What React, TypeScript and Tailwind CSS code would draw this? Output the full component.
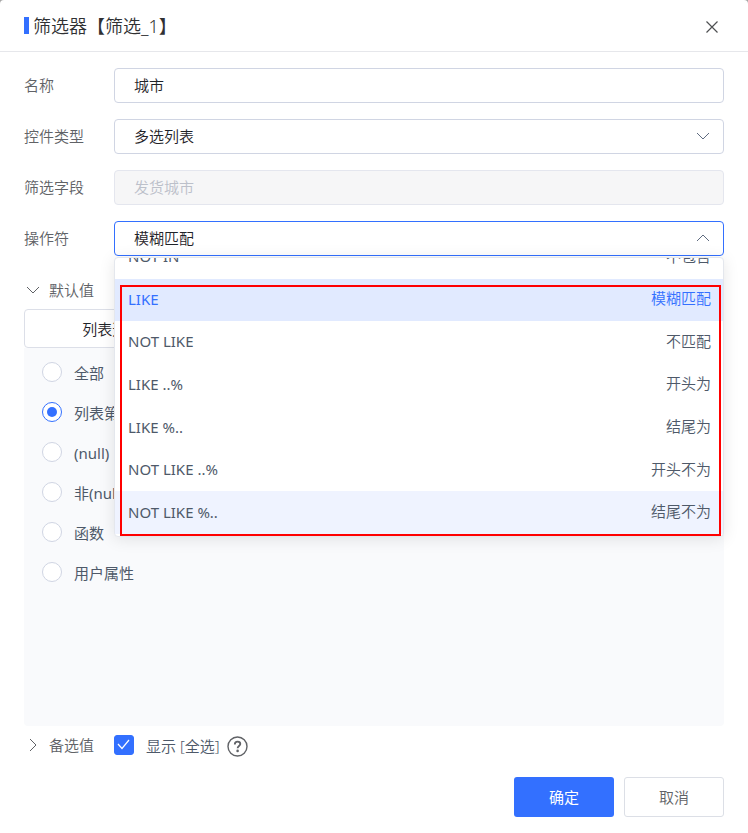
import { useState } from "react";
import type { ReactNode } from "react";

const operators = [
  { value: "NOT IN", label: "不包含" },
  { value: "LIKE", label: "模糊匹配" },
  { value: "NOT LIKE", label: "不匹配" },
  { value: "LIKE ..%", label: "开头为" },
  { value: "LIKE %..", label: "结尾为" },
  { value: "NOT LIKE ..%", label: "开头不为" },
  { value: "NOT LIKE %..", label: "结尾不为" },
];

const defaults = ["全部", "列表第一项", "(null)", "非(null)", "函数", "用户属性"];

const fieldClass =
  "w-full h-[35px] rounded border border-[#d0d5e3] bg-white pl-[19px] pr-10 pb-[2px] text-[15px] text-[#1f2329] appearance-none outline-none";

function Chevron({ className }: { className?: string }) {
  return (
    <svg className={className} width="14" height="8" viewBox="0 0 14 8" fill="none" stroke="currentColor">
      <path d="M1 1l6 6 6-6" />
    </svg>
  );
}

function Field({ id, label, children }: { id: string; label: string; children: ReactNode }) {
  return (
    <div className="flex items-center">
      <label htmlFor={id} className="w-[90px] shrink-0 pb-[2px] text-[#606266]">
        {label}
      </label>
      <div className="relative flex-1">{children}</div>
    </div>
  );
}

export default function App() {
  const [name, setName] = useState("城市");
  const [operator, setOperator] = useState("LIKE");
  const [defaultValue, setDefaultValue] = useState("列表第一项");
  const [showAll, setShowAll] = useState(true);

  return (
    <div className="min-h-screen bg-[#a5a5a5] flex flex-col text-[15px] leading-5 font-[350] font-['Noto_Sans','Noto_Sans_CJK_SC',sans-serif]">
      <div className="flex-1 flex flex-col bg-white rounded-t">
        {/* Header */}
        <header className="h-[52px] shrink-0 flex items-center justify-between px-6 border-b border-[#e6e7eb]">
          <h1 className="flex items-center gap-1 text-[18px] leading-6 font-[350] text-[#303133]">
            <span className="w-[5px] h-[17px] bg-[#3370ff]" />
            筛选器【筛选_1】
          </h1>
          <button type="button" aria-label="关闭" className="w-6 h-6 mt-[2px] flex items-center justify-center text-[#4e5052]">
            <svg width="12" height="12" viewBox="0 0 12 12" fill="none" stroke="currentColor" strokeWidth="1.2">
              <path d="M.5.5l11 11M11.5.5l-11 11" />
            </svg>
          </button>
        </header>

        <main className="flex-1 flex flex-col px-6 pt-4">
          <div className="flex flex-col gap-4">
            <Field id="name" label="名称">
              <input id="name" className={fieldClass} value={name} onChange={(e) => setName(e.target.value)} />
            </Field>
            <Field id="type" label="控件类型">
              <select id="type" className={fieldClass}>
                <option>多选列表</option>
              </select>
              <Chevron className="absolute right-[14px] top-[13px] text-[#5f6b80] pointer-events-none" />
            </Field>
            <Field id="field" label="筛选字段">
              <input
                id="field"
                disabled
                value="发货城市"
                readOnly
                className="w-full h-[35px] rounded border border-[#e4e6ee] bg-[#f6f6f7] pl-[19px] pb-[2px] text-[15px] text-[#bcc0ca]"
              />
            </Field>
            <Field id="operator" label="操作符">
              <select
                id="operator"
                value={operator}
                onChange={(e) => setOperator(e.target.value)}
                className="w-full h-[35px] rounded border border-[#3370ff] bg-white pl-[19px] pr-10 pb-[2px] text-[15px] text-[#1f2329] appearance-none outline-none"
              >
                {operators.map((o) => (
                  <option key={o.value} value={o.value}>
                    {o.label}
                  </option>
                ))}
              </select>
              <Chevron className="absolute right-[14px] top-[13px] text-[#5f6b80] rotate-180 pointer-events-none" />

              {/* Operator list, scrolled to its end */}
              <div className="absolute z-10 left-0 right-0 top-9 h-[280px] rounded border border-[#e4e7ed] bg-white shadow-[0_2px_16px_rgba(0,0,0,0.1)]">
                <div className="h-full flex flex-col justify-end overflow-hidden pb-[2px]">
                  <ul role="listbox" aria-label="操作符" className="shrink-0 h-[298px] grid grid-rows-7">
                    {operators.map((o) => (
                      <li
                        key={o.value}
                        role="option"
                        aria-selected={o.value === operator}
                        onClick={() => setOperator(o.value)}
                        className={[
                          "flex items-center justify-between px-3 cursor-pointer",
                          o.value === operator
                            ? "bg-[#e1eaff] text-[#3370ff]"
                            : "text-[#4e5969] last:bg-[#eff3ff] hover:bg-[#eff3ff]",
                        ].join(" ")}
                      >
                        <span className="pl-px pb-[2px] font-normal">{o.value}</span>
                        <span className="pb-[3px]">{o.label}</span>
                      </li>
                    ))}
                  </ul>
                </div>
                <div className="absolute left-[5px] right-[2px] top-[27px] bottom-0 border-2 border-[#ff0000] pointer-events-none" />
              </div>
            </Field>
          </div>

          {/* Default value */}
          <button type="button" className="mt-4 h-[37px] shrink-0 self-start flex items-center gap-[9px] pl-[2px] pb-[2px] text-[#606266]">
            <Chevron />
            默认值
          </button>
          <div className="h-[39px] shrink-0 flex rounded border border-[#dcdfe8]">
            <button type="button" className="w-1/4 text-[#1f2329]">
              列表选项
            </button>
          </div>
          <div className="flex-1 min-h-[260px] rounded-b bg-[#f9fafc] pt-1 pl-[18px]">
            {defaults.map((d) => (
              <label key={d} className="h-10 flex items-center gap-3 font-normal text-[#4e5969]">
                <input
                  type="radio"
                  name="default"
                  checked={defaultValue === d}
                  onChange={() => setDefaultValue(d)}
                  className="appearance-none w-5 h-5 rounded-full border border-[#d0d5e3] bg-white flex items-center justify-center checked:border-[#3370ff] checked:before:block checked:before:w-[10px] checked:before:h-[10px] checked:before:rounded-full checked:before:bg-[#3370ff]"
                />
                <span className="pt-[2px]">{d}</span>
              </label>
            ))}
          </div>

          {/* Options */}
          <div className="h-[39px] shrink-0 flex items-center">
            <button type="button" className="w-[90px] flex items-center gap-[9px] pl-[2px] pb-[2px] text-[#606266]">
              <Chevron className="-rotate-90" />
              备选值
            </button>
            <label className="flex items-center gap-3 text-[#4e5969]">
              <span className="relative w-5 h-[22px]">
                <input
                  type="checkbox"
                  checked={showAll}
                  onChange={(e) => setShowAll(e.target.checked)}
                  className="block appearance-none w-5 h-5 rounded-[3px] border border-[#d0d5e3] checked:border-[#3370ff] checked:bg-[#3370ff]"
                />
                <svg className="absolute inset-0 pointer-events-none" width="20" height="20" viewBox="0 0 20 20" fill="none" stroke="#fff" strokeWidth="1.2">
                  <path d="M4 9l4 4.500 7-8.500" />
                </svg>
              </span>
              <span>显示 [全选]</span>
            </label>
            <button type="button" aria-label="帮助" className="ml-[7px] pt-[2px] text-[#606266]">
              <svg width="21" height="21" viewBox="0 0 21 21" fill="none" stroke="currentColor">
                <circle cx="10.500" cy="10.500" r="9.500" strokeWidth="1.400" />
                <path d="M7.800 8.400c0-1.700 1.200-2.700 2.800-2.700s2.700 1 2.700 2.400c0 1.900-2.700 2-2.700 4.100" strokeWidth="1.800" />
                <circle cx="10.600" cy="14.900" r="1.300" fill="currentColor" stroke="none" />
              </svg>
            </button>
          </div>
        </main>

        <footer className="shrink-0 flex justify-end gap-[10px] px-6 pt-3 pb-4">
          <button type="button" className="w-[100px] h-10 rounded-[3px] bg-[#3370ff] text-white font-normal">
            确定
          </button>
          <button type="button" className="w-[100px] h-10 rounded-[3px] border border-[#dcdfe6] bg-white text-[#606266]">
            取消
          </button>
        </footer>
      </div>
    </div>
  );
}
